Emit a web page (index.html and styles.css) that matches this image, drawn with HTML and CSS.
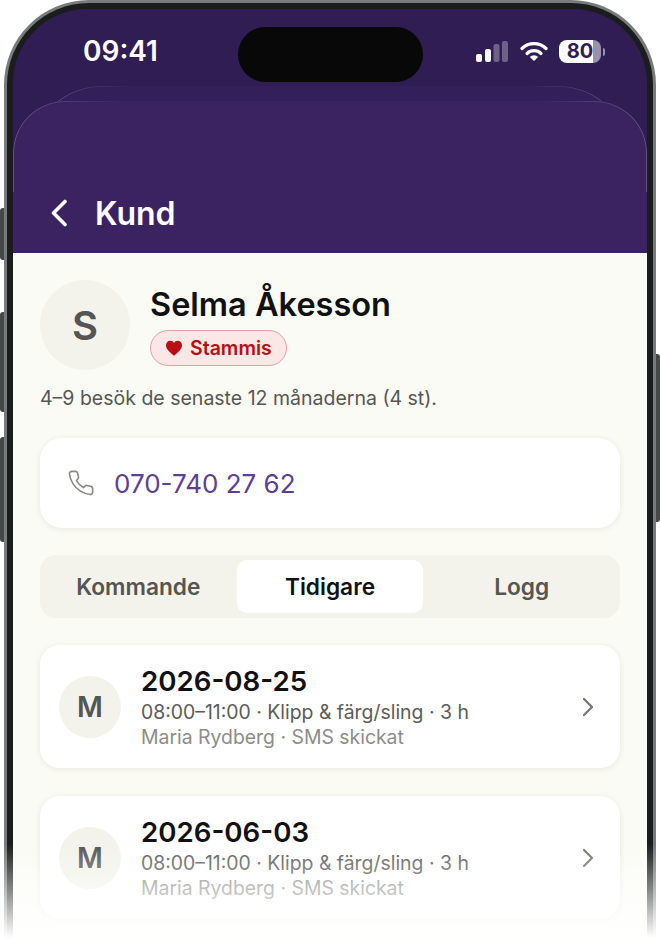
FILE: index.html
```html
<!DOCTYPE html>
<html lang="sv">
<head>
    <meta charset="UTF-8">
    <title>Kund</title>
    <link rel="stylesheet" href="styles.css">
</head>
<body>
    <div class="stage">
        <!-- side buttons -->
        <div class="btn btn-1"></div>
        <div class="btn btn-2"></div>
        <div class="btn btn-3"></div>
        <div class="btn btn-4"></div>

        <div class="phone">
            <div class="screen">
                <div class="status">
                    <div class="time">09:41</div>
                    <div class="island"></div>
                    <div class="status-icons">
                        <svg class="signal" width="32" height="21" viewBox="0 0 32 21">
                            <rect x="0" y="13" width="6" height="8" rx="2" fill="#fff"/>
                            <rect x="9" y="8" width="6" height="13" rx="2" fill="#fff"/>
                            <rect x="17.500" y="3" width="6" height="18" rx="2" fill="#fff" opacity="0.3"/>
                            <rect x="26" y="0" width="6" height="21" rx="2" fill="#fff" opacity="0.3"/>
                        </svg>
                        <svg class="wifi" width="28" height="20" viewBox="0 0 28 20">
                            <path d="M2 7.500a17 17 0 0 1 24 0" fill="none" stroke="#fff" stroke-width="3.200" stroke-linecap="round"/>
                            <path d="M7 12.500a10 10 0 0 1 14 0" fill="none" stroke="#fff" stroke-width="3.200" stroke-linecap="round"/>
                            <path d="M9.800 16a6 6 0 0 1 8.400 0L14 20z" fill="#fff"/>
                        </svg>
                        <div class="battery">
                            <div class="battery-body">80</div>
                            <div class="battery-nub"></div>
                        </div>
                    </div>
                </div>

                <div class="sheet-back"></div>

                <div class="sheet">
                    <div class="header">
                        <svg class="back" width="18" height="28" viewBox="0 0 18 28">
                            <path d="M15 2.500L3.500 14L15 25.500" fill="none" stroke="#fff" stroke-width="3.600" stroke-linecap="round" stroke-linejoin="round"/>
                        </svg>
                        <div class="header-title">Kund</div>
                    </div>

                    <div class="content">
                        <div class="profile">
                            <div class="avatar avatar-big">S</div>
                            <div class="profile-info">
                                <div class="name">Selma Åkesson</div>
                                <div class="badge">
                                    <svg width="18" height="16" viewBox="0 0 24 22">
                                        <path d="M12 21.500C5 15.800 1 12 1 7.200 1 3.500 3.800 1 7 1c2 0 3.900 1 5 3 1.100-2 3-3 5-3 3.200 0 6 2.500 6 6.200 0 4.800-4 8.600-11 14.300z" fill="#b80f14"/>
                                    </svg>
                                    <span>Stammis</span>
                                </div>
                            </div>
                        </div>
                        <div class="visits">4–9 besök de senaste 12 månaderna (4 st).</div>

                        <div class="phone-card">
                            <svg width="28" height="28" viewBox="0 0 24 24">
                                <path d="M22 16.900v3a2 2 0 0 1-2.200 2 19.800 19.800 0 0 1-8.600-3.100 19.500 19.500 0 0 1-6-6A19.800 19.800 0 0 1 2.100 4.200 2 2 0 0 1 4.100 2h3a2 2 0 0 1 2 1.700c.1 1 .4 1.900.7 2.800a2 2 0 0 1-.5 2.100L8.100 9.900a16 16 0 0 0 6 6l1.300-1.300a2 2 0 0 1 2.100-.4c.9.300 1.800.6 2.800.7a2 2 0 0 1 1.700 2z" fill="none" stroke="#8a8a86" stroke-width="1.400" stroke-linejoin="round"/>
                            </svg>
                            <span class="phone-no">070-740 27 62</span>
                        </div>

                        <div class="tabs">
                            <div class="tab">Kommande</div>
                            <div class="tab current">Tidigare</div>
                            <div class="tab">Logg</div>
                        </div>

                        <div class="item">
                            <div class="avatar avatar-small">M</div>
                            <div class="item-text">
                                <div class="item-date">2026-08-25</div>
                                <div class="item-time">08:00–11:00 · Klipp &amp; färg/sling · 3 h</div>
                                <div class="item-who">Maria Rydberg · SMS skickat</div>
                            </div>
                            <svg width="14" height="20" viewBox="0 0 14 20">
                                <path d="M3 2l8 8-8 8" fill="none" stroke="#73736f" stroke-width="2.200" stroke-linecap="round" stroke-linejoin="round"/>
                            </svg>
                        </div>

                        <div class="item">
                            <div class="avatar avatar-small">M</div>
                            <div class="item-text">
                                <div class="item-date">2026-06-03</div>
                                <div class="item-time">08:00–11:00 · Klipp &amp; färg/sling · 3 h</div>
                                <div class="item-who">Maria Rydberg · SMS skickat</div>
                            </div>
                            <svg width="14" height="20" viewBox="0 0 14 20">
                                <path d="M3 2l8 8-8 8" fill="none" stroke="#73736f" stroke-width="2.200" stroke-linecap="round" stroke-linejoin="round"/>
                            </svg>
                        </div>
                    </div>
                </div>
            </div>
        </div>

        <div class="fade"></div>
    </div>
</body>
</html>
```

FILE: styles.css
```css
*{
    padding: 0;
    margin: 0;
    box-sizing: border-box;
}
body{
    background: #fff;
    font-family: Inter, "Noto Sans", sans-serif;
    overflow: hidden;
}
.stage{
    position: relative;
    width: 660px;
    height: 944px;
    overflow: hidden;
}
.btn{
    position: absolute;
    width: 5px;
    background: #454849;
}
.btn-1{
    left: 0;
    top: 208px;
    height: 52px;
    border-radius: 3px 0 0 3px;
}
.btn-2{
    left: 0;
    top: 312px;
    height: 100px;
    border-radius: 3px 0 0 3px;
}
.btn-3{
    left: 0;
    top: 437px;
    height: 105px;
    border-radius: 3px 0 0 3px;
}
.btn-4{
    right: 0;
    top: 354px;
    height: 168px;
    border-radius: 0 3px 3px 0;
}
.phone{
    position: relative;
    margin: 0 4px;
    height: 1000px;
    padding: 6px;
    background: #1b1d1d;
    border: 3px solid #787b7b;
    border-bottom: 0;
    border-radius: 85px 85px 0 0;
}
.screen{
    position: relative;
    height: 100%;
    background: #2f1d54;
    border-radius: 74px 74px 0 0;
    overflow: hidden;
}

/* status bar */
.status{
    display: grid;
    grid-template-columns: 225px 185px 1fr;
    height: 77px;
    color: #fff;
}
.time{
    padding: 25px 0 0 70px;
    font-size: 28px;
    line-height: 34px;
    font-weight: 600;
}
.island{
    margin-top: 18px;
    height: 55px;
    background: #080808;
    border-radius: 28px;
}
.status-icons{
    display: flex;
    align-items: flex-start;
    padding: 31px 0 0 53px;
}
.signal{
    margin-top: 1px;
}
.wifi{
    margin: 1px 0 0 12px;
}
.battery{
    display: flex;
    align-items: center;
    margin-left: 11px;
}
.battery-body{
    width: 42px;
    height: 23px;
    border-radius: 8px;
    background: linear-gradient(90deg, #fff 80%, #9a90ad 80%);
    color: #2f1d54;
    font-size: 20px;
    line-height: 23px;
    font-weight: 700;
    text-align: center;
}
.battery-nub{
    width: 2px;
    height: 8px;
    margin-left: 2px;
    background: #9a90ad;
    border-radius: 0 2px 2px 0;
}

/* stacked sheets */
.sheet-back{
    position: absolute;
    left: 18px;
    right: 18px;
    top: 77px;
    height: 90px;
    background: #33205a;
    border-radius: 70px 70px 0 0;
}
.sheet{
    position: relative;
    margin-top: 15px;
    background: #3b2361;
    border-radius: 52px 52px 0 0;
}
/* hairline that only shows round the corners */
.sheet-back::before,
.sheet::before{
    content: "";
    position: absolute;
    left: 0;
    right: 0;
    top: 0;
    height: 90px;
    border: 1px solid rgba(255,255,255,0.22);
    border-bottom: 0;
    border-radius: inherit;
    -webkit-mask-image: linear-gradient(90deg, #000, transparent 17%, transparent 83%, #000);
    mask-image: linear-gradient(90deg, #000, transparent 17%, transparent 83%, #000);
}
.header{
    display: flex;
    align-items: center;
    height: 152px;
    padding: 71px 0 0 37px;
    color: #fff;
}
.back{
    margin-right: 27px;
}
.header-title{
    margin-top: 2px;
    font-size: 32px;
    font-weight: 600;
}
.content{
    height: 800px;
    padding: 27px 27px 0;
    background: #fbfbf5;
}

/* profile */
.profile{
    display: flex;
    gap: 20px;
}
.avatar{
    display: flex;
    align-items: center;
    justify-content: center;
    flex-shrink: 0;
    background: #f3f3ec;
    border-radius: 50%;
    color: #555552;
    font-weight: 600;
}
.avatar-big{
    width: 90px;
    height: 90px;
    font-size: 40px;
}
.avatar-small{
    width: 62px;
    height: 62px;
    font-size: 28px;
}
.profile-info{
    padding-top: 5px;
}
.name{
    font-size: 32.500px;
    line-height: 40px;
    font-weight: 600;
    color: #111;
}
.badge{
    display: inline-flex;
    align-items: center;
    gap: 7px;
    height: 36px;
    margin-top: 5px;
    padding: 0 14px 0 14px;
    background: #fbe7e5;
    border: 1px solid #e69fa3;
    border-radius: 18px;
    color: #b80f14;
    font-size: 19.500px;
    font-weight: 600;
}
.visits{
    margin-top: 16px;
    font-size: 19.500px;
    line-height: 24px;
    color: #565653;
}

/* phone number */
.phone-card{
    display: flex;
    align-items: center;
    gap: 19px;
    height: 90px;
    margin-top: 28px;
    padding-left: 27px;
    background: #fff;
    border-radius: 22px;
    box-shadow: 0 1px 6px rgba(40,40,20,0.09);
}
.phone-no{
    font-size: 26px;
    color: #5b3f96;
}

/* tabs */
.tabs{
    display: grid;
    grid-template-columns: 1fr 1fr 1fr;
    gap: 5px;
    height: 63px;
    margin-top: 27px;
    padding: 5px;
    background: #f3f3ec;
    border-radius: 16px;
}
.tab{
    display: flex;
    align-items: center;
    justify-content: center;
    border-radius: 10px;
    color: #555552;
    font-size: 22.700px;
    font-weight: 600;
}
.tab.current{
    background: #fff;
    color: #111;
}

/* visit list */
.item{
    display: flex;
    align-items: center;
    height: 123px;
    margin-top: 27px;
    padding: 0 25px 0 19px;
    background: #fff;
    border-radius: 20px;
    box-shadow: 0 1px 6px rgba(40,40,20,0.09);
}
.item + .item{
    margin-top: 28px;
}
.item-text{
    flex: 1;
    margin-left: 20px;
    padding-top: 1px;
}
.item-date{
    font-size: 27.700px;
    line-height: 35px;
    font-weight: 600;
    color: #111;
}
.item-time{
    margin-top: 1px;
    font-size: 19.400px;
    line-height: 25px;
    color: #5c5c59;
}
.item-who{
    font-size: 19.400px;
    line-height: 25px;
    color: #8c8c88;
}

/* fade over bottom of phone */
.fade{
    position: absolute;
    left: 0;
    right: 0;
    bottom: 0;
    height: 100px;
    background: linear-gradient(rgba(255,255,255,0), rgba(255,255,255,0.45) 44%, #fff 94%);
}
```
